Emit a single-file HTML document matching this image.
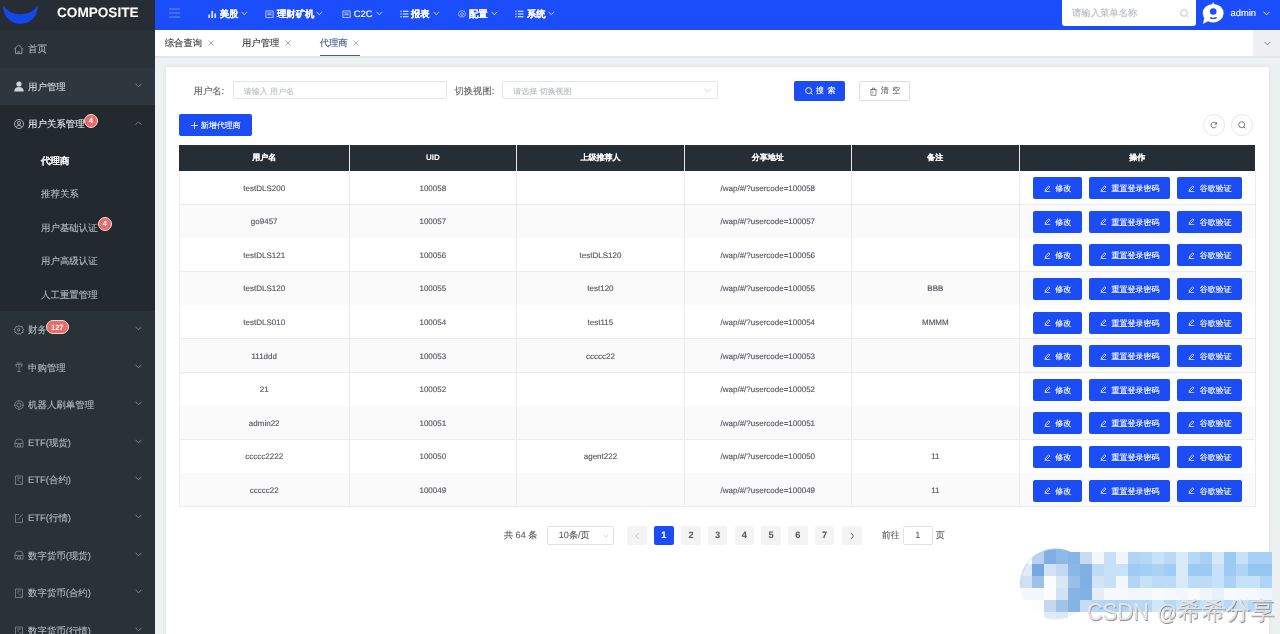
<!DOCTYPE html><html><head><meta charset="utf-8"><style>
*{box-sizing:border-box;margin:0;padding:0}
html,body{width:1280px;height:634px;overflow:hidden;background:#eef1f2;font-family:"Liberation Sans",sans-serif;text-rendering:geometricPrecision}
.abs{position:absolute}
.t{position:absolute;white-space:nowrap;-webkit-text-stroke:0.12px currentColor}
.t[style*=bold]{-webkit-text-stroke:0.04px currentColor}
.badge{position:absolute;background:#ea6b6b;color:#fff;font-size:7.5px;font-weight:bold;text-align:center;border:0.8px solid #f3dede}
</style></head><body><div id="root" style="position:absolute;left:0;top:0;width:1280px;height:634px;overflow:hidden;will-change:transform">
<div class="abs" style="left:0;top:0;width:155px;height:634px;background:#283237;overflow:hidden">
<div class="abs" style="left:0;top:0;width:155px;height:30px;background:#262d34"></div>
<svg class="abs" style="left:2px;top:4px" width="38" height="22" viewBox="0 0 38 22"><path d="M1 1.2 C1 13.5 10 19.8 18.5 19.8 C27 19.8 36 13.5 36 1.2 C32 7 26 10.2 18.5 10.2 C11 10.2 5 7 1 1.2Z" fill="#1448ec"/></svg>
<div class="t" style="left:57px;top:5px;font-size:13.6px;font-weight:bold;color:#fff">COMPOSITE</div>
<div class="abs" style="left:0;top:67.63px;width:155px;height:37.63px;background:#2f373e"></div>
<div class="abs" style="left:0;top:105.26px;width:155px;height:205.63px;background:#22292f"></div>
<svg class="abs" style="left:14px;top:43.81px" width="10" height="11" viewBox="0 0 10 11"><path d="M0.5 5.2 L4.6 0.9 L8.9 5.2 M1.5 4.3 V9.6 H7.9 V4.3" fill="none" stroke="#a9b1b8" stroke-width="0.75"/><path d="M3.8 9.6 V7.6 H5.4 V9.6" fill="none" stroke="#a9b1b8" stroke-width="0.6"/></svg><div class="t" style="left:28px;top:31.00px;height:37.63px;line-height:37.63px;font-size:9.45px;color:#b3bac1;">首页</div>
<svg class="abs" style="left:14px;top:81.44px" width="10" height="11" viewBox="0 0 10 11"><circle cx="5" cy="3" r="2.6" fill="#d0d5da"/><path d="M0.3 10.5 Q0.3 6 5 6 Q9.7 6 9.7 10.5Z" fill="#d0d5da"/></svg><div class="t" style="left:28px;top:68.63px;height:37.63px;line-height:37.63px;font-size:9.45px;color:#d6dbe0;">用户管理</div><svg class="abs" style="left:133.5px;top:81.64px" width="9" height="7" viewBox="0 0 9 7"><path d="M1.5 1.8 L4.5 4.8 L7.5 1.8" fill="none" stroke="#8f979e" stroke-width="0.8"/></svg>
<svg class="abs" style="left:14px;top:119.07px" width="10" height="11" viewBox="0 0 10 11"><circle cx="5" cy="5" r="4.5" fill="none" stroke="#c9ced3" stroke-width="0.8"/><circle cx="5" cy="4" r="1.6" fill="none" stroke="#c9ced3" stroke-width="0.8"/><path d="M2.3 8.3 Q3 6.2 5 6.2 Q7 6.2 7.7 8.3" fill="none" stroke="#c9ced3" stroke-width="0.8"/></svg><div class="t" style="left:28px;top:106.26px;height:37.63px;line-height:37.63px;font-size:9.45px;color:#e6eaee;">用户关系管理</div><svg class="abs" style="left:133.5px;top:120.17px" width="9" height="7" viewBox="0 0 9 7"><path d="M1.5 4.8 L4.5 1.8 L7.5 4.8" fill="none" stroke="#8f979e" stroke-width="0.8"/></svg><div class="badge" style="left:83.9px;top:114.27px;width:14px;height:14px;line-height:12.8px;border-radius:7px">4</div>
<div class="t" style="left:41px;top:144.59px;height:33.60px;line-height:33.60px;font-size:9.45px;color:#f0f2f4;font-weight:bold;">代理商</div>
<div class="t" style="left:41px;top:178.19px;height:33.60px;line-height:33.60px;font-size:9.45px;color:#b3bac1;">推荐关系</div>
<div class="t" style="left:41px;top:211.79px;height:33.60px;line-height:33.60px;font-size:9.45px;color:#b3bac1;">用户基础认证</div><div class="badge" style="left:97.9px;top:217.29px;width:14px;height:14px;line-height:12.8px;border-radius:7px">4</div>
<div class="t" style="left:41px;top:245.39px;height:33.60px;line-height:33.60px;font-size:9.45px;color:#b3bac1;">用户高级认证</div>
<div class="t" style="left:41px;top:278.99px;height:33.60px;line-height:33.60px;font-size:9.45px;color:#b3bac1;">人工重置管理</div>
<svg class="abs" style="left:14px;top:324.70px" width="10" height="11" viewBox="0 0 10 11"><circle cx="4.7" cy="4.8" r="1.2" fill="none" stroke="#a9b1b8" stroke-width="0.7"/><path d="M5 0.6 L6.2 1.6 L7.9 1.3 L8.3 3 L9.6 4.1 L8.9 5.6 L9.3 7.3 L7.6 7.7 L6.6 9.2 L5 8.6 L3.4 9.2 L2.4 7.7 L0.7 7.3 L1.1 5.6 L0.4 4.1 L1.7 3 L2.1 1.3 L3.8 1.6Z" fill="none" stroke="#a9b1b8" stroke-width="0.7"/></svg><div class="t" style="left:28px;top:311.89px;height:37.63px;line-height:37.63px;font-size:9.45px;color:#b3bac1;">财务</div><svg class="abs" style="left:133.5px;top:324.90px" width="9" height="7" viewBox="0 0 9 7"><path d="M1.5 1.8 L4.5 4.8 L7.5 1.8" fill="none" stroke="#8f979e" stroke-width="0.8"/></svg><div class="badge" style="left:45.6px;top:320.20px;width:23.3px;height:14px;line-height:13px;border-radius:7px">127</div>
<svg class="abs" style="left:14px;top:362.33px" width="10" height="11" viewBox="0 0 10 11"><path d="M1.5 2.5 H8.5 M5 2.5 V9.5 M3.2 9.5 H6.8 M2.5 1 H7.5 M2 2.5 Q2 5 3.5 5 M8 2.5 Q8 5 6.5 5" fill="none" stroke="#8e979e" stroke-width="0.7"/></svg><div class="t" style="left:28px;top:349.52px;height:37.63px;line-height:37.63px;font-size:9.45px;color:#b3bac1;">申购管理</div><svg class="abs" style="left:133.5px;top:362.53px" width="9" height="7" viewBox="0 0 9 7"><path d="M1.5 1.8 L4.5 4.8 L7.5 1.8" fill="none" stroke="#8f979e" stroke-width="0.8"/></svg>
<svg class="abs" style="left:14px;top:399.96px" width="10" height="11" viewBox="0 0 10 11"><circle cx="5" cy="5" r="4.3" fill="none" stroke="#8e979e" stroke-width="0.7"/><circle cx="5" cy="5" r="2" fill="none" stroke="#8e979e" stroke-width="0.7"/><path d="M5 0.7V2.5M5 7.5V9.3M0.7 5H2.5M7.5 5H9.3" stroke="#8e979e" stroke-width="0.7"/></svg><div class="t" style="left:28px;top:387.15px;height:37.63px;line-height:37.63px;font-size:9.45px;color:#b3bac1;">机器人刷单管理</div><svg class="abs" style="left:133.5px;top:400.16px" width="9" height="7" viewBox="0 0 9 7"><path d="M1.5 1.8 L4.5 4.8 L7.5 1.8" fill="none" stroke="#8f979e" stroke-width="0.8"/></svg>
<svg class="abs" style="left:14px;top:437.59px" width="10" height="11" viewBox="0 0 10 11"><path d="M1 4 Q1 1 5 1 Q9 1 9 4 V9 H1Z M1 5.5 H9 M3.5 9 V6.8 H6.5 V9" fill="none" stroke="#8e979e" stroke-width="0.7"/></svg><div class="t" style="left:28px;top:424.78px;height:37.63px;line-height:37.63px;font-size:9.45px;color:#b3bac1;">ETF(现货)</div><svg class="abs" style="left:133.5px;top:437.79px" width="9" height="7" viewBox="0 0 9 7"><path d="M1.5 1.8 L4.5 4.8 L7.5 1.8" fill="none" stroke="#8f979e" stroke-width="0.8"/></svg>
<svg class="abs" style="left:14px;top:475.22px" width="10" height="11" viewBox="0 0 10 11"><path d="M1.5 1 H8.5 V9.5 H1.5Z M3 3 H7 M3 5 H5 M5.5 6 L7.5 8.5" fill="none" stroke="#8e979e" stroke-width="0.7"/></svg><div class="t" style="left:28px;top:462.41px;height:37.63px;line-height:37.63px;font-size:9.45px;color:#b3bac1;">ETF(合约)</div><svg class="abs" style="left:133.5px;top:475.42px" width="9" height="7" viewBox="0 0 9 7"><path d="M1.5 1.8 L4.5 4.8 L7.5 1.8" fill="none" stroke="#8f979e" stroke-width="0.8"/></svg>
<svg class="abs" style="left:14px;top:512.86px" width="10" height="11" viewBox="0 0 10 11"><path d="M5 1.5 H1.5 V9.5 H8.5 V5.5 M4 6.5 L8.8 1.2" fill="none" stroke="#8e979e" stroke-width="0.7"/></svg><div class="t" style="left:28px;top:500.04px;height:37.63px;line-height:37.63px;font-size:9.45px;color:#b3bac1;">ETF(行情)</div><svg class="abs" style="left:133.5px;top:513.06px" width="9" height="7" viewBox="0 0 9 7"><path d="M1.5 1.8 L4.5 4.8 L7.5 1.8" fill="none" stroke="#8f979e" stroke-width="0.8"/></svg>
<svg class="abs" style="left:14px;top:550.49px" width="10" height="11" viewBox="0 0 10 11"><path d="M1 4 Q1 1 5 1 Q9 1 9 4 V9 H1Z M1 5.5 H9 M3.5 9 V6.8 H6.5 V9" fill="none" stroke="#8e979e" stroke-width="0.7"/></svg><div class="t" style="left:28px;top:537.67px;height:37.63px;line-height:37.63px;font-size:9.45px;color:#b3bac1;">数字货币(现货)</div><svg class="abs" style="left:133.5px;top:550.69px" width="9" height="7" viewBox="0 0 9 7"><path d="M1.5 1.8 L4.5 4.8 L7.5 1.8" fill="none" stroke="#8f979e" stroke-width="0.8"/></svg>
<svg class="abs" style="left:14px;top:588.12px" width="10" height="11" viewBox="0 0 10 11"><path d="M1.5 1 H8.5 V9.5 H1.5Z M3 3 H7 M3 5 H5 M5.5 6 L7.5 8.5" fill="none" stroke="#8e979e" stroke-width="0.7"/></svg><div class="t" style="left:28px;top:575.30px;height:37.63px;line-height:37.63px;font-size:9.45px;color:#b3bac1;">数字货币(合约)</div><svg class="abs" style="left:133.5px;top:588.32px" width="9" height="7" viewBox="0 0 9 7"><path d="M1.5 1.8 L4.5 4.8 L7.5 1.8" fill="none" stroke="#8f979e" stroke-width="0.8"/></svg>
<svg class="abs" style="left:14px;top:625.75px" width="10" height="11" viewBox="0 0 10 11"><path d="M1.5 1 H8.5 V9.5 H1.5Z M3 3 H7 M3 5 H5 M5.5 6 L7.5 8.5" fill="none" stroke="#8e979e" stroke-width="0.7"/></svg><div class="t" style="left:28px;top:612.93px;height:37.63px;line-height:37.63px;font-size:9.45px;color:#b3bac1;">数字货币(行情)</div><svg class="abs" style="left:133.5px;top:625.95px" width="9" height="7" viewBox="0 0 9 7"><path d="M1.5 1.8 L4.5 4.8 L7.5 1.8" fill="none" stroke="#8f979e" stroke-width="0.8"/></svg>
</div>
<div class="abs" style="left:155px;top:0;width:1125px;height:30px;background:#1b4dfa"></div>
<svg class="abs" style="left:169px;top:8px" width="11" height="10" viewBox="0 0 11 10"><path d="M0 1H11M0 5H11M0 9H11" stroke="#86a2fa" stroke-width="0.75"/></svg>
<svg class="abs" style="left:207.8px;top:9.8px" width="9" height="8.5" viewBox="0 0 9 8.5"><path d="M1.2 8V5.2M4.2 8V1.5M7.2 8V4" stroke="#dfe6fd" stroke-width="1.7" stroke-linecap="round"/></svg>
<div class="t" style="left:219.7px;top:0.5px;height:27px;line-height:27px;font-size:9.33px;font-weight:bold;color:#fff">美股</div>
<svg class="abs" style="left:241.3px;top:11.3px" width="7" height="5" viewBox="0 0 7 5"><path d="M0.6 0.8 L3.3 3.8 L6 0.8" fill="none" stroke="#e8edfe" stroke-width="0.85"/></svg>
<svg class="abs" style="left:265.3px;top:9.8px" width="9" height="8.5" viewBox="0 0 9 8.5"><path d="M0.9 0.9H8.1V7.6H0.9Z M2.4 3H6.6M2.4 4.8H6.6" fill="none" stroke="#d6e0fd" stroke-width="0.85"/></svg>
<div class="t" style="left:277px;top:0.5px;height:27px;line-height:27px;font-size:9.33px;font-weight:bold;color:#fff">理财矿机</div>
<svg class="abs" style="left:316.3px;top:11.3px" width="7" height="5" viewBox="0 0 7 5"><path d="M0.6 0.8 L3.3 3.8 L6 0.8" fill="none" stroke="#e8edfe" stroke-width="0.85"/></svg>
<svg class="abs" style="left:341.8px;top:9.8px" width="9" height="8.5" viewBox="0 0 9 8.5"><path d="M0.9 0.9H8.1V7.6H0.9Z M2.4 3H6.6M2.4 4.8H6.6" fill="none" stroke="#d6e0fd" stroke-width="0.85"/></svg>
<div class="t" style="left:353.8px;top:0.5px;height:27px;line-height:27px;font-size:9.33px;color:#fff">C2C</div>
<svg class="abs" style="left:375.5px;top:11.3px" width="7" height="5" viewBox="0 0 7 5"><path d="M0.6 0.8 L3.3 3.8 L6 0.8" fill="none" stroke="#e8edfe" stroke-width="0.85"/></svg>
<svg class="abs" style="left:400px;top:9.8px" width="9" height="8.5" viewBox="0 0 9 8.5"><path d="M0.3 1.2H1.6M2.8 1.2H8.5M0.3 4H1.6M2.8 4H8.5M0.3 6.8H1.6M2.8 6.8H8.5" stroke="#fff" stroke-width="1.1"/></svg>
<div class="t" style="left:411px;top:0.5px;height:27px;line-height:27px;font-size:9.33px;font-weight:bold;color:#fff">报表</div>
<svg class="abs" style="left:433px;top:11.3px" width="7" height="5" viewBox="0 0 7 5"><path d="M0.6 0.8 L3.3 3.8 L6 0.8" fill="none" stroke="#e8edfe" stroke-width="0.85"/></svg>
<svg class="abs" style="left:458px;top:9.8px" width="9" height="8.5" viewBox="0 0 9 8.5"><circle cx="4" cy="4" r="1.4" fill="none" stroke="#c9d5fc" stroke-width="0.7"/><path d="M4 0.4 L5 1.2 L6.3 1 L6.6 2.3 L7.7 3.1 L7.1 4.3 L7.4 5.6 L6.1 5.9 L5.3 7.1 L4 6.6 L2.7 7.1 L1.9 5.9 L0.6 5.6 L0.9 4.3 L0.3 3.1 L1.4 2.3 L1.7 1 L3 1.2Z" fill="none" stroke="#c9d5fc" stroke-width="0.7"/></svg>
<div class="t" style="left:469px;top:0.5px;height:27px;line-height:27px;font-size:9.33px;font-weight:bold;color:#fff">配置</div>
<svg class="abs" style="left:491px;top:11.3px" width="7" height="5" viewBox="0 0 7 5"><path d="M0.6 0.8 L3.3 3.8 L6 0.8" fill="none" stroke="#e8edfe" stroke-width="0.85"/></svg>
<svg class="abs" style="left:515px;top:9.8px" width="9" height="8.5" viewBox="0 0 9 8.5"><path d="M0.3 1.2H1.6M2.8 1.2H8.5M0.3 4H1.6M2.8 4H8.5M0.3 6.8H1.6M2.8 6.8H8.5" stroke="#fff" stroke-width="1.1"/></svg>
<div class="t" style="left:527px;top:0.5px;height:27px;line-height:27px;font-size:9.33px;font-weight:bold;color:#fff">系统</div>
<svg class="abs" style="left:548px;top:11.3px" width="7" height="5" viewBox="0 0 7 5"><path d="M0.6 0.8 L3.3 3.8 L6 0.8" fill="none" stroke="#e8edfe" stroke-width="0.85"/></svg>
<div class="abs" style="left:1061.5px;top:-3px;width:134px;height:28.5px;background:#fff;border-radius:3px"></div>
<div class="t" style="left:1072px;top:0;height:26px;line-height:26px;font-size:9.33px;color:#b4b8bf">请输入菜单名称</div>
<svg class="abs" style="left:1179.5px;top:8.5px" width="9" height="9" viewBox="0 0 9 9"><circle cx="4" cy="4" r="3.3" fill="none" stroke="#b4b8bf" stroke-width="0.8"/><path d="M6.5 6.5L8.5 8.5" stroke="#b4b8bf" stroke-width="0.8"/></svg>
<svg class="abs" style="left:1201px;top:1px" width="24" height="24" viewBox="0 0 24 24"><ellipse cx="12.2" cy="12.2" rx="10.4" ry="9.3" fill="#fff"/><path d="M3.6 16 L1.8 23 L8.5 19.5Z" fill="#fff"/><rect x="11.5" y="1.6" width="1.4" height="3" fill="#fff"/><circle cx="12.2" cy="10.5" r="3.3" fill="#1b4dfa"/><path d="M9 16.6 Q12.2 18.2 15.6 16.6" fill="none" stroke="#1b4dfa" stroke-width="1.3"/></svg>
<div class="t" style="left:1230.5px;top:0;height:27px;line-height:27px;font-size:9.33px;color:#fff">admin</div>
<svg class="abs" style="left:1262px;top:10.20px" width="9" height="7" viewBox="0 0 9 7"><path d="M1.5 1.8 L4.5 4.8 L7.5 1.8" fill="none" stroke="#fff" stroke-width="0.9"/></svg>
<div class="abs" style="left:155px;top:30px;width:1125px;height:26.5px;background:#fff"></div>
<div class="abs" style="left:155px;top:56.3px;width:1125px;height:1.7px;background:#e3e5e7"></div>
<div class="abs" style="left:1253px;top:30px;width:27px;height:26.3px;background:#eef0f2"></div>
<svg class="abs" style="left:1262.5px;top:39.70px" width="9" height="7" viewBox="0 0 9 7"><path d="M1.5 1.8 L4.5 4.8 L7.5 1.8" fill="none" stroke="#666" stroke-width="0.8"/></svg>
<div class="t" style="left:164.75px;top:30px;height:26px;line-height:26px;font-size:9.33px;color:#363636">综合查询</div>
<svg class="abs" style="left:208px;top:40px" width="6" height="6" viewBox="0 0 6 6"><path d="M0.5 0.5L5.5 5.5M5.5 0.5L0.5 5.5" stroke="#888" stroke-width="0.7"/></svg>
<div class="t" style="left:242px;top:30px;height:26px;line-height:26px;font-size:9.33px;color:#363636">用户管理</div>
<svg class="abs" style="left:285px;top:40px" width="6" height="6" viewBox="0 0 6 6"><path d="M0.5 0.5L5.5 5.5M5.5 0.5L0.5 5.5" stroke="#888" stroke-width="0.7"/></svg>
<div class="t" style="left:319.7px;top:30px;height:26px;line-height:26px;font-size:9.33px;color:#3d5a8c">代理商</div>
<svg class="abs" style="left:353px;top:40px" width="6" height="6" viewBox="0 0 6 6"><path d="M0.5 0.5L5.5 5.5M5.5 0.5L0.5 5.5" stroke="#888" stroke-width="0.7"/></svg>
<div class="abs" style="left:319.7px;top:54.7px;width:40.6px;height:1.6px;background:#4a6186"></div>
<div class="abs" style="left:165.5px;top:66.5px;width:1103.5px;height:580px;background:#fff;box-shadow:0 0 4px rgba(40,60,70,0.10)"></div>
<div class="t" style="left:193.6px;top:81.5px;height:18.5px;line-height:18.5px;font-size:9.33px;color:#606266">用户名:</div>
<div class="abs" style="left:233.3px;top:81.2px;width:214.2px;height:18.2px;border:0.75px solid #e2e5e9;border-radius:1.5px;background:#fff"></div>
<div class="t" style="left:243.8px;top:82.5px;height:18.5px;line-height:18.5px;font-size:8px;color:#b8bcc3">请输入 用户名</div>
<div class="t" style="left:454.4px;top:81.5px;height:18.5px;line-height:18.5px;font-size:9.33px;color:#606266">切换视图:</div>
<div class="abs" style="left:502.3px;top:81.2px;width:215.5px;height:18.2px;border:0.75px solid #e2e5e9;border-radius:1.5px;background:#fff"></div>
<div class="t" style="left:513.3px;top:82.5px;height:18.5px;line-height:18.5px;font-size:8px;color:#b8bcc3">请选择 切换视图</div>
<svg class="abs" style="left:703px;top:87.20px" width="9" height="7" viewBox="0 0 9 7"><path d="M1.5 1.8 L4.5 4.8 L7.5 1.8" fill="none" stroke="#c0c4cc" stroke-width="0.7"/></svg>
<div class="abs" style="left:794.4px;top:81px;width:51px;height:19.5px;background:#1c4df4;border-radius:2px"></div>
<svg class="abs" style="left:805px;top:87px" width="8" height="8" viewBox="0 0 8 8"><circle cx="3.6" cy="3.6" r="3" fill="none" stroke="#fff" stroke-width="0.9"/><path d="M5.8 5.8L7.5 7.5" stroke="#fff" stroke-width="0.9"/></svg>
<div class="t" style="left:816px;top:81px;height:19.5px;line-height:19.5px;font-size:8px;color:#fff;letter-spacing:3.5px">搜索</div>
<div class="abs" style="left:858.5px;top:81px;width:51px;height:19.5px;background:#fff;border:0.7px solid #dcdfe6;border-radius:2px"></div>
<svg class="abs" style="left:869.5px;top:86.5px" width="7" height="9" viewBox="0 0 7 9"><path d="M1 2.5H6V8.3H1Z M0.3 2.5H6.7 M2.5 2.5V1H4.5V2.5 M2.8 4.5V6.5" fill="none" stroke="#606266" stroke-width="0.7"/></svg>
<div class="t" style="left:880.7px;top:81px;height:19.5px;line-height:19.5px;font-size:8px;color:#606266;letter-spacing:3.5px">清空</div>
<div class="abs" style="left:179px;top:114.4px;width:73px;height:21.6px;background:#1c4df4;border-radius:2px"></div>
<svg class="abs" style="left:190.5px;top:122px" width="7" height="7" viewBox="0 0 7 7"><path d="M3.5 0V7M0 3.5H7" stroke="#fff" stroke-width="0.8"/></svg>
<div class="t" style="left:200.7px;top:115.4px;height:21.6px;line-height:21.6px;font-size:8px;color:#fff">新增代理商</div>
<div class="abs" style="left:1203.3px;top:114.1px;width:21.5px;height:21.5px;border:0.7px solid #e4e7ed;border-radius:50%;background:#fff"></div>
<div class="abs" style="left:1231px;top:114.1px;width:21.5px;height:21.5px;border:0.7px solid #e4e7ed;border-radius:50%;background:#fff"></div>
<svg class="abs" style="left:1210px;top:121px" width="8" height="8" viewBox="0 0 8 8"><path d="M6.5 3 A2.8 2.8 0 1 0 6.3 5.5 M6.5 1.2V3.2H4.5" fill="none" stroke="#555" stroke-width="0.8"/></svg>
<svg class="abs" style="left:1238px;top:121px" width="8" height="8" viewBox="0 0 8 8"><circle cx="3.7" cy="3.7" r="3" fill="none" stroke="#555" stroke-width="0.8"/><path d="M5.9 5.9L7.4 7.4" stroke="#555" stroke-width="0.8"/></svg>
<div class="abs" style="left:179.3px;top:145px;width:1076.00px;height:26px;background:#262e35"></div>
<div class="t" style="left:179.30px;top:145px;width:169.80px;height:26px;line-height:26px;text-align:center;font-size:8px;font-weight:bold;color:#fff">用户名</div>
<div class="t" style="left:349.10px;top:145px;width:167.40px;height:26px;line-height:26px;text-align:center;font-size:8px;font-weight:bold;color:#fff">UID</div>
<div class="t" style="left:516.50px;top:145px;width:167.90px;height:26px;line-height:26px;text-align:center;font-size:8px;font-weight:bold;color:#fff">上级推荐人</div>
<div class="t" style="left:684.40px;top:145px;width:166.85px;height:26px;line-height:26px;text-align:center;font-size:8px;font-weight:bold;color:#fff">分享地址</div>
<div class="t" style="left:851.25px;top:145px;width:168.15px;height:26px;line-height:26px;text-align:center;font-size:8px;font-weight:bold;color:#fff">备注</div>
<div class="t" style="left:1019.40px;top:145px;width:235.90px;height:26px;line-height:26px;text-align:center;font-size:8px;font-weight:bold;color:#fff">操作</div>
<div class="abs" style="left:348.60px;top:145px;width:1px;height:26px;background:#e8eaee"></div>
<div class="abs" style="left:516.00px;top:145px;width:1px;height:26px;background:#e8eaee"></div>
<div class="abs" style="left:683.90px;top:145px;width:1px;height:26px;background:#e8eaee"></div>
<div class="abs" style="left:850.75px;top:145px;width:1px;height:26px;background:#e8eaee"></div>
<div class="abs" style="left:1018.90px;top:145px;width:1px;height:26px;background:#e8eaee"></div>
<div class="abs" style="left:179.3px;top:171.00px;width:1076.00px;height:33.60px;background:#fff"></div>
<div class="abs" style="left:179.3px;top:203.90px;width:1076.00px;height:0.7px;background:#eaedef"></div>
<div class="t" style="left:179.30px;top:171.60px;width:169.80px;height:33.60px;line-height:33.60px;text-align:center;font-size:8px;color:#50535a">testDLS200</div>
<div class="t" style="left:349.10px;top:171.60px;width:167.40px;height:33.60px;line-height:33.60px;text-align:center;font-size:8px;color:#50535a">100058</div>
<div class="t" style="left:684.40px;top:171.60px;width:166.85px;height:33.60px;line-height:33.60px;text-align:center;font-size:8px;color:#50535a">/wap/#/?usercode=100058</div>
<div class="abs" style="left:1033.1px;top:177.20px;width:48.8px;height:22px;background:#1c4df4;border-radius:2px"></div>
<svg class="abs" style="left:1044.4px;top:184.80px" width="7" height="7" viewBox="0 0 7 7"><path d="M1.2 5.4 L1.5 4 L4.8 0.8 L6 2 L2.7 5.2 Z M0.6 6.6 H6.2" fill="none" stroke="#fff" stroke-width="0.75"/></svg>
<div class="t" style="left:1055.3px;top:178.10px;height:22px;line-height:22px;font-size:8px;color:#fff">修改</div>
<div class="abs" style="left:1089px;top:177.20px;width:81px;height:22px;background:#1c4df4;border-radius:2px"></div>
<svg class="abs" style="left:1100.3px;top:184.80px" width="7" height="7" viewBox="0 0 7 7"><path d="M1.2 5.4 L1.5 4 L4.8 0.8 L6 2 L2.7 5.2 Z M0.6 6.6 H6.2" fill="none" stroke="#fff" stroke-width="0.75"/></svg>
<div class="t" style="left:1111.5px;top:178.10px;height:22px;line-height:22px;font-size:8px;color:#fff">重置登录密码</div>
<div class="abs" style="left:1177.2px;top:177.20px;width:65px;height:22px;background:#1c4df4;border-radius:2px"></div>
<svg class="abs" style="left:1188.4px;top:184.80px" width="7" height="7" viewBox="0 0 7 7"><path d="M1.2 5.4 L1.5 4 L4.8 0.8 L6 2 L2.7 5.2 Z M0.6 6.6 H6.2" fill="none" stroke="#fff" stroke-width="0.75"/></svg>
<div class="t" style="left:1199.7px;top:178.10px;height:22px;line-height:22px;font-size:8px;color:#fff">谷歌验证</div>
<div class="abs" style="left:179.3px;top:204.60px;width:1076.00px;height:33.60px;background:#fafafa"></div>
<div class="abs" style="left:179.3px;top:237.50px;width:1076.00px;height:0.7px;background:#eaedef"></div>
<div class="t" style="left:179.30px;top:205.20px;width:169.80px;height:33.60px;line-height:33.60px;text-align:center;font-size:8px;color:#50535a">go9457</div>
<div class="t" style="left:349.10px;top:205.20px;width:167.40px;height:33.60px;line-height:33.60px;text-align:center;font-size:8px;color:#50535a">100057</div>
<div class="t" style="left:684.40px;top:205.20px;width:166.85px;height:33.60px;line-height:33.60px;text-align:center;font-size:8px;color:#50535a">/wap/#/?usercode=100057</div>
<div class="abs" style="left:1033.1px;top:210.80px;width:48.8px;height:22px;background:#1c4df4;border-radius:2px"></div>
<svg class="abs" style="left:1044.4px;top:218.40px" width="7" height="7" viewBox="0 0 7 7"><path d="M1.2 5.4 L1.5 4 L4.8 0.8 L6 2 L2.7 5.2 Z M0.6 6.6 H6.2" fill="none" stroke="#fff" stroke-width="0.75"/></svg>
<div class="t" style="left:1055.3px;top:211.70px;height:22px;line-height:22px;font-size:8px;color:#fff">修改</div>
<div class="abs" style="left:1089px;top:210.80px;width:81px;height:22px;background:#1c4df4;border-radius:2px"></div>
<svg class="abs" style="left:1100.3px;top:218.40px" width="7" height="7" viewBox="0 0 7 7"><path d="M1.2 5.4 L1.5 4 L4.8 0.8 L6 2 L2.7 5.2 Z M0.6 6.6 H6.2" fill="none" stroke="#fff" stroke-width="0.75"/></svg>
<div class="t" style="left:1111.5px;top:211.70px;height:22px;line-height:22px;font-size:8px;color:#fff">重置登录密码</div>
<div class="abs" style="left:1177.2px;top:210.80px;width:65px;height:22px;background:#1c4df4;border-radius:2px"></div>
<svg class="abs" style="left:1188.4px;top:218.40px" width="7" height="7" viewBox="0 0 7 7"><path d="M1.2 5.4 L1.5 4 L4.8 0.8 L6 2 L2.7 5.2 Z M0.6 6.6 H6.2" fill="none" stroke="#fff" stroke-width="0.75"/></svg>
<div class="t" style="left:1199.7px;top:211.70px;height:22px;line-height:22px;font-size:8px;color:#fff">谷歌验证</div>
<div class="abs" style="left:179.3px;top:238.20px;width:1076.00px;height:33.60px;background:#fff"></div>
<div class="abs" style="left:179.3px;top:271.10px;width:1076.00px;height:0.7px;background:#eaedef"></div>
<div class="t" style="left:179.30px;top:238.80px;width:169.80px;height:33.60px;line-height:33.60px;text-align:center;font-size:8px;color:#50535a">testDLS121</div>
<div class="t" style="left:349.10px;top:238.80px;width:167.40px;height:33.60px;line-height:33.60px;text-align:center;font-size:8px;color:#50535a">100056</div>
<div class="t" style="left:516.50px;top:238.80px;width:167.90px;height:33.60px;line-height:33.60px;text-align:center;font-size:8px;color:#50535a">testDLS120</div>
<div class="t" style="left:684.40px;top:238.80px;width:166.85px;height:33.60px;line-height:33.60px;text-align:center;font-size:8px;color:#50535a">/wap/#/?usercode=100056</div>
<div class="abs" style="left:1033.1px;top:244.40px;width:48.8px;height:22px;background:#1c4df4;border-radius:2px"></div>
<svg class="abs" style="left:1044.4px;top:252.00px" width="7" height="7" viewBox="0 0 7 7"><path d="M1.2 5.4 L1.5 4 L4.8 0.8 L6 2 L2.7 5.2 Z M0.6 6.6 H6.2" fill="none" stroke="#fff" stroke-width="0.75"/></svg>
<div class="t" style="left:1055.3px;top:245.30px;height:22px;line-height:22px;font-size:8px;color:#fff">修改</div>
<div class="abs" style="left:1089px;top:244.40px;width:81px;height:22px;background:#1c4df4;border-radius:2px"></div>
<svg class="abs" style="left:1100.3px;top:252.00px" width="7" height="7" viewBox="0 0 7 7"><path d="M1.2 5.4 L1.5 4 L4.8 0.8 L6 2 L2.7 5.2 Z M0.6 6.6 H6.2" fill="none" stroke="#fff" stroke-width="0.75"/></svg>
<div class="t" style="left:1111.5px;top:245.30px;height:22px;line-height:22px;font-size:8px;color:#fff">重置登录密码</div>
<div class="abs" style="left:1177.2px;top:244.40px;width:65px;height:22px;background:#1c4df4;border-radius:2px"></div>
<svg class="abs" style="left:1188.4px;top:252.00px" width="7" height="7" viewBox="0 0 7 7"><path d="M1.2 5.4 L1.5 4 L4.8 0.8 L6 2 L2.7 5.2 Z M0.6 6.6 H6.2" fill="none" stroke="#fff" stroke-width="0.75"/></svg>
<div class="t" style="left:1199.7px;top:245.30px;height:22px;line-height:22px;font-size:8px;color:#fff">谷歌验证</div>
<div class="abs" style="left:179.3px;top:271.80px;width:1076.00px;height:33.60px;background:#fafafa"></div>
<div class="abs" style="left:179.3px;top:304.70px;width:1076.00px;height:0.7px;background:#eaedef"></div>
<div class="t" style="left:179.30px;top:272.40px;width:169.80px;height:33.60px;line-height:33.60px;text-align:center;font-size:8px;color:#50535a">testDLS120</div>
<div class="t" style="left:349.10px;top:272.40px;width:167.40px;height:33.60px;line-height:33.60px;text-align:center;font-size:8px;color:#50535a">100055</div>
<div class="t" style="left:516.50px;top:272.40px;width:167.90px;height:33.60px;line-height:33.60px;text-align:center;font-size:8px;color:#50535a">test120</div>
<div class="t" style="left:684.40px;top:272.40px;width:166.85px;height:33.60px;line-height:33.60px;text-align:center;font-size:8px;color:#50535a">/wap/#/?usercode=100055</div>
<div class="t" style="left:851.25px;top:272.40px;width:168.15px;height:33.60px;line-height:33.60px;text-align:center;font-size:8px;color:#50535a">BBB</div>
<div class="abs" style="left:1033.1px;top:278.00px;width:48.8px;height:22px;background:#1c4df4;border-radius:2px"></div>
<svg class="abs" style="left:1044.4px;top:285.60px" width="7" height="7" viewBox="0 0 7 7"><path d="M1.2 5.4 L1.5 4 L4.8 0.8 L6 2 L2.7 5.2 Z M0.6 6.6 H6.2" fill="none" stroke="#fff" stroke-width="0.75"/></svg>
<div class="t" style="left:1055.3px;top:278.90px;height:22px;line-height:22px;font-size:8px;color:#fff">修改</div>
<div class="abs" style="left:1089px;top:278.00px;width:81px;height:22px;background:#1c4df4;border-radius:2px"></div>
<svg class="abs" style="left:1100.3px;top:285.60px" width="7" height="7" viewBox="0 0 7 7"><path d="M1.2 5.4 L1.5 4 L4.8 0.8 L6 2 L2.7 5.2 Z M0.6 6.6 H6.2" fill="none" stroke="#fff" stroke-width="0.75"/></svg>
<div class="t" style="left:1111.5px;top:278.90px;height:22px;line-height:22px;font-size:8px;color:#fff">重置登录密码</div>
<div class="abs" style="left:1177.2px;top:278.00px;width:65px;height:22px;background:#1c4df4;border-radius:2px"></div>
<svg class="abs" style="left:1188.4px;top:285.60px" width="7" height="7" viewBox="0 0 7 7"><path d="M1.2 5.4 L1.5 4 L4.8 0.8 L6 2 L2.7 5.2 Z M0.6 6.6 H6.2" fill="none" stroke="#fff" stroke-width="0.75"/></svg>
<div class="t" style="left:1199.7px;top:278.90px;height:22px;line-height:22px;font-size:8px;color:#fff">谷歌验证</div>
<div class="abs" style="left:179.3px;top:305.40px;width:1076.00px;height:33.60px;background:#fff"></div>
<div class="abs" style="left:179.3px;top:338.30px;width:1076.00px;height:0.7px;background:#eaedef"></div>
<div class="t" style="left:179.30px;top:306.00px;width:169.80px;height:33.60px;line-height:33.60px;text-align:center;font-size:8px;color:#50535a">testDLS010</div>
<div class="t" style="left:349.10px;top:306.00px;width:167.40px;height:33.60px;line-height:33.60px;text-align:center;font-size:8px;color:#50535a">100054</div>
<div class="t" style="left:516.50px;top:306.00px;width:167.90px;height:33.60px;line-height:33.60px;text-align:center;font-size:8px;color:#50535a">test115</div>
<div class="t" style="left:684.40px;top:306.00px;width:166.85px;height:33.60px;line-height:33.60px;text-align:center;font-size:8px;color:#50535a">/wap/#/?usercode=100054</div>
<div class="t" style="left:851.25px;top:306.00px;width:168.15px;height:33.60px;line-height:33.60px;text-align:center;font-size:8px;color:#50535a">MMMM</div>
<div class="abs" style="left:1033.1px;top:311.60px;width:48.8px;height:22px;background:#1c4df4;border-radius:2px"></div>
<svg class="abs" style="left:1044.4px;top:319.20px" width="7" height="7" viewBox="0 0 7 7"><path d="M1.2 5.4 L1.5 4 L4.8 0.8 L6 2 L2.7 5.2 Z M0.6 6.6 H6.2" fill="none" stroke="#fff" stroke-width="0.75"/></svg>
<div class="t" style="left:1055.3px;top:312.50px;height:22px;line-height:22px;font-size:8px;color:#fff">修改</div>
<div class="abs" style="left:1089px;top:311.60px;width:81px;height:22px;background:#1c4df4;border-radius:2px"></div>
<svg class="abs" style="left:1100.3px;top:319.20px" width="7" height="7" viewBox="0 0 7 7"><path d="M1.2 5.4 L1.5 4 L4.8 0.8 L6 2 L2.7 5.2 Z M0.6 6.6 H6.2" fill="none" stroke="#fff" stroke-width="0.75"/></svg>
<div class="t" style="left:1111.5px;top:312.50px;height:22px;line-height:22px;font-size:8px;color:#fff">重置登录密码</div>
<div class="abs" style="left:1177.2px;top:311.60px;width:65px;height:22px;background:#1c4df4;border-radius:2px"></div>
<svg class="abs" style="left:1188.4px;top:319.20px" width="7" height="7" viewBox="0 0 7 7"><path d="M1.2 5.4 L1.5 4 L4.8 0.8 L6 2 L2.7 5.2 Z M0.6 6.6 H6.2" fill="none" stroke="#fff" stroke-width="0.75"/></svg>
<div class="t" style="left:1199.7px;top:312.50px;height:22px;line-height:22px;font-size:8px;color:#fff">谷歌验证</div>
<div class="abs" style="left:179.3px;top:339.00px;width:1076.00px;height:33.60px;background:#fafafa"></div>
<div class="abs" style="left:179.3px;top:371.90px;width:1076.00px;height:0.7px;background:#eaedef"></div>
<div class="t" style="left:179.30px;top:339.60px;width:169.80px;height:33.60px;line-height:33.60px;text-align:center;font-size:8px;color:#50535a">111ddd</div>
<div class="t" style="left:349.10px;top:339.60px;width:167.40px;height:33.60px;line-height:33.60px;text-align:center;font-size:8px;color:#50535a">100053</div>
<div class="t" style="left:516.50px;top:339.60px;width:167.90px;height:33.60px;line-height:33.60px;text-align:center;font-size:8px;color:#50535a">ccccc22</div>
<div class="t" style="left:684.40px;top:339.60px;width:166.85px;height:33.60px;line-height:33.60px;text-align:center;font-size:8px;color:#50535a">/wap/#/?usercode=100053</div>
<div class="abs" style="left:1033.1px;top:345.20px;width:48.8px;height:22px;background:#1c4df4;border-radius:2px"></div>
<svg class="abs" style="left:1044.4px;top:352.80px" width="7" height="7" viewBox="0 0 7 7"><path d="M1.2 5.4 L1.5 4 L4.8 0.8 L6 2 L2.7 5.2 Z M0.6 6.6 H6.2" fill="none" stroke="#fff" stroke-width="0.75"/></svg>
<div class="t" style="left:1055.3px;top:346.10px;height:22px;line-height:22px;font-size:8px;color:#fff">修改</div>
<div class="abs" style="left:1089px;top:345.20px;width:81px;height:22px;background:#1c4df4;border-radius:2px"></div>
<svg class="abs" style="left:1100.3px;top:352.80px" width="7" height="7" viewBox="0 0 7 7"><path d="M1.2 5.4 L1.5 4 L4.8 0.8 L6 2 L2.7 5.2 Z M0.6 6.6 H6.2" fill="none" stroke="#fff" stroke-width="0.75"/></svg>
<div class="t" style="left:1111.5px;top:346.10px;height:22px;line-height:22px;font-size:8px;color:#fff">重置登录密码</div>
<div class="abs" style="left:1177.2px;top:345.20px;width:65px;height:22px;background:#1c4df4;border-radius:2px"></div>
<svg class="abs" style="left:1188.4px;top:352.80px" width="7" height="7" viewBox="0 0 7 7"><path d="M1.2 5.4 L1.5 4 L4.8 0.8 L6 2 L2.7 5.2 Z M0.6 6.6 H6.2" fill="none" stroke="#fff" stroke-width="0.75"/></svg>
<div class="t" style="left:1199.7px;top:346.10px;height:22px;line-height:22px;font-size:8px;color:#fff">谷歌验证</div>
<div class="abs" style="left:179.3px;top:372.60px;width:1076.00px;height:33.60px;background:#fff"></div>
<div class="abs" style="left:179.3px;top:405.50px;width:1076.00px;height:0.7px;background:#eaedef"></div>
<div class="t" style="left:179.30px;top:373.20px;width:169.80px;height:33.60px;line-height:33.60px;text-align:center;font-size:8px;color:#50535a">21</div>
<div class="t" style="left:349.10px;top:373.20px;width:167.40px;height:33.60px;line-height:33.60px;text-align:center;font-size:8px;color:#50535a">100052</div>
<div class="t" style="left:684.40px;top:373.20px;width:166.85px;height:33.60px;line-height:33.60px;text-align:center;font-size:8px;color:#50535a">/wap/#/?usercode=100052</div>
<div class="abs" style="left:1033.1px;top:378.80px;width:48.8px;height:22px;background:#1c4df4;border-radius:2px"></div>
<svg class="abs" style="left:1044.4px;top:386.40px" width="7" height="7" viewBox="0 0 7 7"><path d="M1.2 5.4 L1.5 4 L4.8 0.8 L6 2 L2.7 5.2 Z M0.6 6.6 H6.2" fill="none" stroke="#fff" stroke-width="0.75"/></svg>
<div class="t" style="left:1055.3px;top:379.70px;height:22px;line-height:22px;font-size:8px;color:#fff">修改</div>
<div class="abs" style="left:1089px;top:378.80px;width:81px;height:22px;background:#1c4df4;border-radius:2px"></div>
<svg class="abs" style="left:1100.3px;top:386.40px" width="7" height="7" viewBox="0 0 7 7"><path d="M1.2 5.4 L1.5 4 L4.8 0.8 L6 2 L2.7 5.2 Z M0.6 6.6 H6.2" fill="none" stroke="#fff" stroke-width="0.75"/></svg>
<div class="t" style="left:1111.5px;top:379.70px;height:22px;line-height:22px;font-size:8px;color:#fff">重置登录密码</div>
<div class="abs" style="left:1177.2px;top:378.80px;width:65px;height:22px;background:#1c4df4;border-radius:2px"></div>
<svg class="abs" style="left:1188.4px;top:386.40px" width="7" height="7" viewBox="0 0 7 7"><path d="M1.2 5.4 L1.5 4 L4.8 0.8 L6 2 L2.7 5.2 Z M0.6 6.6 H6.2" fill="none" stroke="#fff" stroke-width="0.75"/></svg>
<div class="t" style="left:1199.7px;top:379.70px;height:22px;line-height:22px;font-size:8px;color:#fff">谷歌验证</div>
<div class="abs" style="left:179.3px;top:406.20px;width:1076.00px;height:33.60px;background:#fafafa"></div>
<div class="abs" style="left:179.3px;top:439.10px;width:1076.00px;height:0.7px;background:#eaedef"></div>
<div class="t" style="left:179.30px;top:406.80px;width:169.80px;height:33.60px;line-height:33.60px;text-align:center;font-size:8px;color:#50535a">admin22</div>
<div class="t" style="left:349.10px;top:406.80px;width:167.40px;height:33.60px;line-height:33.60px;text-align:center;font-size:8px;color:#50535a">100051</div>
<div class="t" style="left:684.40px;top:406.80px;width:166.85px;height:33.60px;line-height:33.60px;text-align:center;font-size:8px;color:#50535a">/wap/#/?usercode=100051</div>
<div class="abs" style="left:1033.1px;top:412.40px;width:48.8px;height:22px;background:#1c4df4;border-radius:2px"></div>
<svg class="abs" style="left:1044.4px;top:420.00px" width="7" height="7" viewBox="0 0 7 7"><path d="M1.2 5.4 L1.5 4 L4.8 0.8 L6 2 L2.7 5.2 Z M0.6 6.6 H6.2" fill="none" stroke="#fff" stroke-width="0.75"/></svg>
<div class="t" style="left:1055.3px;top:413.30px;height:22px;line-height:22px;font-size:8px;color:#fff">修改</div>
<div class="abs" style="left:1089px;top:412.40px;width:81px;height:22px;background:#1c4df4;border-radius:2px"></div>
<svg class="abs" style="left:1100.3px;top:420.00px" width="7" height="7" viewBox="0 0 7 7"><path d="M1.2 5.4 L1.5 4 L4.8 0.8 L6 2 L2.7 5.2 Z M0.6 6.6 H6.2" fill="none" stroke="#fff" stroke-width="0.75"/></svg>
<div class="t" style="left:1111.5px;top:413.30px;height:22px;line-height:22px;font-size:8px;color:#fff">重置登录密码</div>
<div class="abs" style="left:1177.2px;top:412.40px;width:65px;height:22px;background:#1c4df4;border-radius:2px"></div>
<svg class="abs" style="left:1188.4px;top:420.00px" width="7" height="7" viewBox="0 0 7 7"><path d="M1.2 5.4 L1.5 4 L4.8 0.8 L6 2 L2.7 5.2 Z M0.6 6.6 H6.2" fill="none" stroke="#fff" stroke-width="0.75"/></svg>
<div class="t" style="left:1199.7px;top:413.30px;height:22px;line-height:22px;font-size:8px;color:#fff">谷歌验证</div>
<div class="abs" style="left:179.3px;top:439.80px;width:1076.00px;height:33.60px;background:#fff"></div>
<div class="abs" style="left:179.3px;top:472.70px;width:1076.00px;height:0.7px;background:#eaedef"></div>
<div class="t" style="left:179.30px;top:440.40px;width:169.80px;height:33.60px;line-height:33.60px;text-align:center;font-size:8px;color:#50535a">ccccc2222</div>
<div class="t" style="left:349.10px;top:440.40px;width:167.40px;height:33.60px;line-height:33.60px;text-align:center;font-size:8px;color:#50535a">100050</div>
<div class="t" style="left:516.50px;top:440.40px;width:167.90px;height:33.60px;line-height:33.60px;text-align:center;font-size:8px;color:#50535a">agent222</div>
<div class="t" style="left:684.40px;top:440.40px;width:166.85px;height:33.60px;line-height:33.60px;text-align:center;font-size:8px;color:#50535a">/wap/#/?usercode=100050</div>
<div class="t" style="left:851.25px;top:440.40px;width:168.15px;height:33.60px;line-height:33.60px;text-align:center;font-size:8px;color:#50535a">11</div>
<div class="abs" style="left:1033.1px;top:446.00px;width:48.8px;height:22px;background:#1c4df4;border-radius:2px"></div>
<svg class="abs" style="left:1044.4px;top:453.60px" width="7" height="7" viewBox="0 0 7 7"><path d="M1.2 5.4 L1.5 4 L4.8 0.8 L6 2 L2.7 5.2 Z M0.6 6.6 H6.2" fill="none" stroke="#fff" stroke-width="0.75"/></svg>
<div class="t" style="left:1055.3px;top:446.90px;height:22px;line-height:22px;font-size:8px;color:#fff">修改</div>
<div class="abs" style="left:1089px;top:446.00px;width:81px;height:22px;background:#1c4df4;border-radius:2px"></div>
<svg class="abs" style="left:1100.3px;top:453.60px" width="7" height="7" viewBox="0 0 7 7"><path d="M1.2 5.4 L1.5 4 L4.8 0.8 L6 2 L2.7 5.2 Z M0.6 6.6 H6.2" fill="none" stroke="#fff" stroke-width="0.75"/></svg>
<div class="t" style="left:1111.5px;top:446.90px;height:22px;line-height:22px;font-size:8px;color:#fff">重置登录密码</div>
<div class="abs" style="left:1177.2px;top:446.00px;width:65px;height:22px;background:#1c4df4;border-radius:2px"></div>
<svg class="abs" style="left:1188.4px;top:453.60px" width="7" height="7" viewBox="0 0 7 7"><path d="M1.2 5.4 L1.5 4 L4.8 0.8 L6 2 L2.7 5.2 Z M0.6 6.6 H6.2" fill="none" stroke="#fff" stroke-width="0.75"/></svg>
<div class="t" style="left:1199.7px;top:446.90px;height:22px;line-height:22px;font-size:8px;color:#fff">谷歌验证</div>
<div class="abs" style="left:179.3px;top:473.40px;width:1076.00px;height:33.60px;background:#fafafa"></div>
<div class="abs" style="left:179.3px;top:506.30px;width:1076.00px;height:0.7px;background:#eaedef"></div>
<div class="t" style="left:179.30px;top:474.00px;width:169.80px;height:33.60px;line-height:33.60px;text-align:center;font-size:8px;color:#50535a">ccccc22</div>
<div class="t" style="left:349.10px;top:474.00px;width:167.40px;height:33.60px;line-height:33.60px;text-align:center;font-size:8px;color:#50535a">100049</div>
<div class="t" style="left:684.40px;top:474.00px;width:166.85px;height:33.60px;line-height:33.60px;text-align:center;font-size:8px;color:#50535a">/wap/#/?usercode=100049</div>
<div class="t" style="left:851.25px;top:474.00px;width:168.15px;height:33.60px;line-height:33.60px;text-align:center;font-size:8px;color:#50535a">11</div>
<div class="abs" style="left:1033.1px;top:479.60px;width:48.8px;height:22px;background:#1c4df4;border-radius:2px"></div>
<svg class="abs" style="left:1044.4px;top:487.20px" width="7" height="7" viewBox="0 0 7 7"><path d="M1.2 5.4 L1.5 4 L4.8 0.8 L6 2 L2.7 5.2 Z M0.6 6.6 H6.2" fill="none" stroke="#fff" stroke-width="0.75"/></svg>
<div class="t" style="left:1055.3px;top:480.50px;height:22px;line-height:22px;font-size:8px;color:#fff">修改</div>
<div class="abs" style="left:1089px;top:479.60px;width:81px;height:22px;background:#1c4df4;border-radius:2px"></div>
<svg class="abs" style="left:1100.3px;top:487.20px" width="7" height="7" viewBox="0 0 7 7"><path d="M1.2 5.4 L1.5 4 L4.8 0.8 L6 2 L2.7 5.2 Z M0.6 6.6 H6.2" fill="none" stroke="#fff" stroke-width="0.75"/></svg>
<div class="t" style="left:1111.5px;top:480.50px;height:22px;line-height:22px;font-size:8px;color:#fff">重置登录密码</div>
<div class="abs" style="left:1177.2px;top:479.60px;width:65px;height:22px;background:#1c4df4;border-radius:2px"></div>
<svg class="abs" style="left:1188.4px;top:487.20px" width="7" height="7" viewBox="0 0 7 7"><path d="M1.2 5.4 L1.5 4 L4.8 0.8 L6 2 L2.7 5.2 Z M0.6 6.6 H6.2" fill="none" stroke="#fff" stroke-width="0.75"/></svg>
<div class="t" style="left:1199.7px;top:480.50px;height:22px;line-height:22px;font-size:8px;color:#fff">谷歌验证</div>
<div class="abs" style="left:178.95px;top:171px;width:0.7px;height:336px;background:#eaedef"></div>
<div class="abs" style="left:348.75px;top:171px;width:0.7px;height:336px;background:#eaedef"></div>
<div class="abs" style="left:516.15px;top:171px;width:0.7px;height:336px;background:#eaedef"></div>
<div class="abs" style="left:684.05px;top:171px;width:0.7px;height:336px;background:#eaedef"></div>
<div class="abs" style="left:850.90px;top:171px;width:0.7px;height:336px;background:#eaedef"></div>
<div class="abs" style="left:1019.05px;top:171px;width:0.7px;height:336px;background:#eaedef"></div>
<div class="abs" style="left:1254.95px;top:171px;width:0.7px;height:336px;background:#eaedef"></div>
<div class="t" style="left:504px;top:526.4px;height:18.4px;line-height:18.4px;font-size:9.1px;color:#606266">共 64 条</div>
<div class="abs" style="left:546.6px;top:526.3px;width:67px;height:18.4px;border:0.75px solid #dfe2e6;border-radius:2px;background:#fff"></div>
<div class="t" style="left:558.8px;top:526.4px;height:18.4px;line-height:18.4px;font-size:9.1px;color:#606266">10条/页</div>
<svg class="abs" style="left:602.5px;top:533.5px" width="6" height="4" viewBox="0 0 6 4"><path d="M0.6 0.6 L3 3.2 L5.4 0.6" fill="none" stroke="#c0c4cc" stroke-width="0.7"/></svg>
<div class="abs" style="left:627.2px;top:526.3px;width:19.7px;height:18.4px;background:#f4f4f5;border-radius:2px"></div>
<svg class="abs" style="left:634.0px;top:531.5999999999999px" width="7" height="8" viewBox="0 0 7 8"><path d="M4.5 1 L2 4 L4.5 7" fill="none" stroke="#c0c4cc" stroke-width="0.9"/></svg>
<div class="abs" style="left:654px;top:526.3px;width:19.7px;height:18.4px;background:#1c4df4;border-radius:2px"></div>
<div class="t" style="left:654px;top:526.4px;width:19.7px;height:18.4px;line-height:18.4px;text-align:center;font-size:9.33px;font-weight:bold;color:#fff">1</div>
<div class="abs" style="left:681.2px;top:526.3px;width:19.7px;height:18.4px;background:#f4f4f5;border-radius:2px"></div>
<div class="t" style="left:681.2px;top:526.4px;width:19.7px;height:18.4px;line-height:18.4px;text-align:center;font-size:9.33px;font-weight:bold;color:#55585e">2</div>
<div class="abs" style="left:707.8px;top:526.3px;width:19.7px;height:18.4px;background:#f4f4f5;border-radius:2px"></div>
<div class="t" style="left:707.8px;top:526.4px;width:19.7px;height:18.4px;line-height:18.4px;text-align:center;font-size:9.33px;font-weight:bold;color:#55585e">3</div>
<div class="abs" style="left:734.6px;top:526.3px;width:19.7px;height:18.4px;background:#f4f4f5;border-radius:2px"></div>
<div class="t" style="left:734.6px;top:526.4px;width:19.7px;height:18.4px;line-height:18.4px;text-align:center;font-size:9.33px;font-weight:bold;color:#55585e">4</div>
<div class="abs" style="left:761.3px;top:526.3px;width:19.7px;height:18.4px;background:#f4f4f5;border-radius:2px"></div>
<div class="t" style="left:761.3px;top:526.4px;width:19.7px;height:18.4px;line-height:18.4px;text-align:center;font-size:9.33px;font-weight:bold;color:#55585e">5</div>
<div class="abs" style="left:788px;top:526.3px;width:19.7px;height:18.4px;background:#f4f4f5;border-radius:2px"></div>
<div class="t" style="left:788px;top:526.4px;width:19.7px;height:18.4px;line-height:18.4px;text-align:center;font-size:9.33px;font-weight:bold;color:#55585e">6</div>
<div class="abs" style="left:814.7px;top:526.3px;width:19.7px;height:18.4px;background:#f4f4f5;border-radius:2px"></div>
<div class="t" style="left:814.7px;top:526.4px;width:19.7px;height:18.4px;line-height:18.4px;text-align:center;font-size:9.33px;font-weight:bold;color:#55585e">7</div>
<div class="abs" style="left:842px;top:526.3px;width:19.7px;height:18.4px;background:#f4f4f5;border-radius:2px"></div>
<svg class="abs" style="left:848.8px;top:531.5999999999999px" width="7" height="8" viewBox="0 0 7 8"><path d="M2 1 L4.5 4 L2 7" fill="none" stroke="#555" stroke-width="0.9"/></svg>
<div class="t" style="left:881.7px;top:526.4px;height:18.4px;line-height:18.4px;font-size:9.1px;color:#606266">前往</div>
<div class="abs" style="left:902.9px;top:526.3px;width:30px;height:18.4px;border:0.75px solid #dfe2e6;border-radius:2px;background:#fff"></div>
<div class="t" style="left:902.9px;top:526.4px;width:30px;height:18.4px;line-height:18.4px;text-align:center;font-size:9.1px;color:#606266">1</div>
<div class="t" style="left:935.7px;top:526.4px;height:18.4px;line-height:18.4px;font-size:9.1px;color:#606266">页</div>
<svg class="abs" style="left:1020px;top:540px" width="252" height="84" viewBox="0 0 252 84"><defs><clipPath id="mc"><circle cx="35.5" cy="44" r="35.5"/><rect x="35" y="12" width="217" height="60"/></clipPath></defs><g clip-path="url(#mc)"><rect x="0" y="0" width="12.2" height="12.2" fill="#ffffff"/><rect x="12" y="0" width="12.2" height="12.2" fill="#b9d3ee"/><rect x="24" y="0" width="12.2" height="12.2" fill="#7eaee2"/><rect x="36" y="0" width="12.2" height="12.2" fill="#8cb9e6"/><rect x="48" y="0" width="12.2" height="12.2" fill="#86b5e5"/><rect x="60" y="0" width="12.2" height="12.2" fill="#c6dcf1"/><rect x="72" y="0" width="12.2" height="12.2" fill="#f3f8fd"/><rect x="84" y="0" width="12.2" height="12.2" fill="#c6e0f7"/><rect x="96" y="0" width="12.2" height="12.2" fill="#eef5fc"/><rect x="108" y="0" width="12.2" height="12.2" fill="#b0d4f5"/><rect x="120" y="0" width="12.2" height="12.2" fill="#b5d8f6"/><rect x="132" y="0" width="12.2" height="12.2" fill="#c6e2f9"/><rect x="144" y="0" width="12.2" height="12.2" fill="#b8daf7"/><rect x="156" y="0" width="12.2" height="12.2" fill="#d8ebfb"/><rect x="168" y="0" width="12.2" height="12.2" fill="#b5d8f6"/><rect x="180" y="0" width="12.2" height="12.2" fill="#a6d0f5"/><rect x="192" y="0" width="12.2" height="12.2" fill="#d5e9fa"/><rect x="204" y="0" width="12.2" height="12.2" fill="#9ccaf3"/><rect x="216" y="0" width="12.2" height="12.2" fill="#c6e2f9"/><rect x="228" y="0" width="12.2" height="12.2" fill="#a6d0f5"/><rect x="240" y="0" width="12.2" height="12.2" fill="#a6d0f5"/><rect x="0" y="12" width="12.2" height="12.2" fill="#ffffff"/><rect x="12" y="12" width="12.2" height="12.2" fill="#b9d3ee"/><rect x="24" y="12" width="12.2" height="12.2" fill="#7eaee2"/><rect x="36" y="12" width="12.2" height="12.2" fill="#8cb9e6"/><rect x="48" y="12" width="12.2" height="12.2" fill="#86b5e5"/><rect x="60" y="12" width="12.2" height="12.2" fill="#c6dcf1"/><rect x="72" y="12" width="12.2" height="12.2" fill="#f3f8fd"/><rect x="84" y="12" width="12.2" height="12.2" fill="#c6e0f7"/><rect x="96" y="12" width="12.2" height="12.2" fill="#eef5fc"/><rect x="108" y="12" width="12.2" height="12.2" fill="#b0d4f5"/><rect x="120" y="12" width="12.2" height="12.2" fill="#b5d8f6"/><rect x="132" y="12" width="12.2" height="12.2" fill="#c6e2f9"/><rect x="144" y="12" width="12.2" height="12.2" fill="#b8daf7"/><rect x="156" y="12" width="12.2" height="12.2" fill="#d8ebfb"/><rect x="168" y="12" width="12.2" height="12.2" fill="#b5d8f6"/><rect x="180" y="12" width="12.2" height="12.2" fill="#a6d0f5"/><rect x="192" y="12" width="12.2" height="12.2" fill="#d5e9fa"/><rect x="204" y="12" width="12.2" height="12.2" fill="#9ccaf3"/><rect x="216" y="12" width="12.2" height="12.2" fill="#c6e2f9"/><rect x="228" y="12" width="12.2" height="12.2" fill="#a6d0f5"/><rect x="240" y="12" width="12.2" height="12.2" fill="#a6d0f5"/><rect x="0" y="24" width="12.2" height="12.2" fill="#e0ebf6"/><rect x="12" y="24" width="12.2" height="12.2" fill="#74a8e0"/><rect x="24" y="24" width="12.2" height="12.2" fill="#d4e3f3"/><rect x="36" y="24" width="12.2" height="12.2" fill="#c4d9ef"/><rect x="48" y="24" width="12.2" height="12.2" fill="#8ab7e5"/><rect x="60" y="24" width="12.2" height="12.2" fill="#7fb1e3"/><rect x="72" y="24" width="12.2" height="12.2" fill="#c0dcf5"/><rect x="84" y="24" width="12.2" height="12.2" fill="#c6e1f8"/><rect x="96" y="24" width="12.2" height="12.2" fill="#c8e2f8"/><rect x="108" y="24" width="12.2" height="12.2" fill="#9dcbf3"/><rect x="120" y="24" width="12.2" height="12.2" fill="#a4cff5"/><rect x="132" y="24" width="12.2" height="12.2" fill="#a9d2f5"/><rect x="144" y="24" width="12.2" height="12.2" fill="#a0cdf5"/><rect x="156" y="24" width="12.2" height="12.2" fill="#d8ebfb"/><rect x="168" y="24" width="12.2" height="12.2" fill="#9ccaf3"/><rect x="180" y="24" width="12.2" height="12.2" fill="#9ccaf3"/><rect x="192" y="24" width="12.2" height="12.2" fill="#c6e2f9"/><rect x="204" y="24" width="12.2" height="12.2" fill="#9ccaf3"/><rect x="216" y="24" width="12.2" height="12.2" fill="#b0d4f5"/><rect x="228" y="24" width="12.2" height="12.2" fill="#94c6f2"/><rect x="240" y="24" width="12.2" height="12.2" fill="#94c6f2"/><rect x="0" y="36" width="12.2" height="12.2" fill="#cfe0f2"/><rect x="12" y="36" width="12.2" height="12.2" fill="#9cc2ea"/><rect x="24" y="36" width="12.2" height="12.2" fill="#fafcfe"/><rect x="36" y="36" width="12.2" height="12.2" fill="#d9e6f3"/><rect x="48" y="36" width="12.2" height="12.2" fill="#9ac0e8"/><rect x="60" y="36" width="12.2" height="12.2" fill="#7db0e3"/><rect x="72" y="36" width="12.2" height="12.2" fill="#d3e5f4"/><rect x="84" y="36" width="12.2" height="12.2" fill="#c6e0f6"/><rect x="96" y="36" width="12.2" height="12.2" fill="#f2f8fd"/><rect x="108" y="36" width="12.2" height="12.2" fill="#b3d6f5"/><rect x="120" y="36" width="12.2" height="12.2" fill="#c6e1f8"/><rect x="132" y="36" width="12.2" height="12.2" fill="#bcdbf7"/><rect x="144" y="36" width="12.2" height="12.2" fill="#bcdbf7"/><rect x="156" y="36" width="12.2" height="12.2" fill="#d8ebfb"/><rect x="168" y="36" width="12.2" height="12.2" fill="#bcdbf7"/><rect x="180" y="36" width="12.2" height="12.2" fill="#bcdbf7"/><rect x="192" y="36" width="12.2" height="12.2" fill="#c6e2f9"/><rect x="204" y="36" width="12.2" height="12.2" fill="#aad2f5"/><rect x="216" y="36" width="12.2" height="12.2" fill="#c6e2f9"/><rect x="228" y="36" width="12.2" height="12.2" fill="#c6e2f9"/><rect x="240" y="36" width="12.2" height="12.2" fill="#b0d4f5"/><rect x="0" y="48" width="12.2" height="12.2" fill="#f3f6fa"/><rect x="12" y="48" width="12.2" height="12.2" fill="#f5f8fb"/><rect x="24" y="48" width="12.2" height="12.2" fill="#fbfcfd"/><rect x="36" y="48" width="12.2" height="12.2" fill="#d2e2f2"/><rect x="48" y="48" width="12.2" height="12.2" fill="#86b5e5"/><rect x="60" y="48" width="12.2" height="12.2" fill="#80b2e3"/><rect x="72" y="48" width="12.2" height="12.2" fill="#e3eef8"/><rect x="84" y="48" width="12.2" height="12.2" fill="#f5f9fd"/><rect x="96" y="48" width="12.2" height="12.2" fill="#f5f9fd"/><rect x="108" y="48" width="12.2" height="12.2" fill="#f1f7fc"/><rect x="120" y="48" width="12.2" height="12.2" fill="#f1f7fc"/><rect x="132" y="48" width="12.2" height="12.2" fill="#f8fbfe"/><rect x="144" y="48" width="12.2" height="12.2" fill="#f5f9fd"/><rect x="156" y="48" width="12.2" height="12.2" fill="#f1f7fc"/><rect x="168" y="48" width="12.2" height="12.2" fill="#f8fbfe"/><rect x="180" y="48" width="12.2" height="12.2" fill="#eef5fc"/><rect x="192" y="48" width="12.2" height="12.2" fill="#e8f2fb"/><rect x="204" y="48" width="12.2" height="12.2" fill="#f8fbfe"/><rect x="216" y="48" width="12.2" height="12.2" fill="#f5f9fd"/><rect x="228" y="48" width="12.2" height="12.2" fill="#f5f9fd"/><rect x="240" y="48" width="12.2" height="12.2" fill="#eef5fc"/><rect x="0" y="60" width="12.2" height="12.2" fill="#ffffff"/><rect x="12" y="60" width="12.2" height="12.2" fill="#fcfdfe"/><rect x="24" y="60" width="12.2" height="12.2" fill="#c4d8ee"/><rect x="36" y="60" width="12.2" height="12.2" fill="#a0c3e8"/><rect x="48" y="60" width="12.2" height="12.2" fill="#84b3e4"/><rect x="60" y="60" width="12.2" height="12.2" fill="#c7dcf1"/><rect x="72" y="60" width="12.2" height="12.2" fill="#b5d7f5"/><rect x="84" y="60" width="12.2" height="12.2" fill="#b3d6f5"/><rect x="96" y="60" width="12.2" height="12.2" fill="#b0d4f5"/><rect x="108" y="60" width="12.2" height="12.2" fill="#b5d8f6"/><rect x="120" y="60" width="12.2" height="12.2" fill="#b5d8f6"/><rect x="132" y="60" width="12.2" height="12.2" fill="#d0e6f9"/><rect x="144" y="60" width="12.2" height="12.2" fill="#b5d8f6"/><rect x="156" y="60" width="12.2" height="12.2" fill="#c6e2f9"/><rect x="168" y="60" width="12.2" height="12.2" fill="#b5d8f6"/><rect x="180" y="60" width="12.2" height="12.2" fill="#c6e2f9"/><rect x="192" y="60" width="12.2" height="12.2" fill="#c6e2f9"/><rect x="204" y="60" width="12.2" height="12.2" fill="#b5d8f6"/><rect x="216" y="60" width="12.2" height="12.2" fill="#c6e2f9"/><rect x="228" y="60" width="12.2" height="12.2" fill="#b5d8f6"/><rect x="240" y="60" width="12.2" height="12.2" fill="#a6d0f5"/><rect x="0" y="72" width="12.2" height="12.2" fill="#ffffff"/><rect x="12" y="72" width="12.2" height="12.2" fill="#ffffff"/><rect x="24" y="72" width="12.2" height="12.2" fill="#e0ecf7"/><rect x="36" y="72" width="12.2" height="12.2" fill="#dbe8f5"/><rect x="48" y="72" width="12.2" height="12.2" fill="#f3f7fb"/><rect x="60" y="72" width="12.2" height="12.2" fill="#ffffff"/><rect x="72" y="72" width="12.2" height="12.2" fill="#ffffff"/><rect x="84" y="72" width="12.2" height="12.2" fill="#ffffff"/><rect x="96" y="72" width="12.2" height="12.2" fill="#ffffff"/><rect x="108" y="72" width="12.2" height="12.2" fill="#ffffff"/><rect x="120" y="72" width="12.2" height="12.2" fill="#ffffff"/><rect x="132" y="72" width="12.2" height="12.2" fill="#ffffff"/><rect x="144" y="72" width="12.2" height="12.2" fill="#ffffff"/><rect x="156" y="72" width="12.2" height="12.2" fill="#ffffff"/><rect x="168" y="72" width="12.2" height="12.2" fill="#ffffff"/><rect x="180" y="72" width="12.2" height="12.2" fill="#ffffff"/><rect x="192" y="72" width="12.2" height="12.2" fill="#ffffff"/><rect x="204" y="72" width="12.2" height="12.2" fill="#ffffff"/><rect x="216" y="72" width="12.2" height="12.2" fill="#ffffff"/><rect x="228" y="72" width="12.2" height="12.2" fill="#ffffff"/><rect x="240" y="72" width="12.2" height="12.2" fill="#ffffff"/></g><path d="M0.6 47 A35.2 35.2 0 0 1 38 9" fill="none" stroke="#bcd5ee" stroke-width="1" opacity="0.8"/></svg>
<div class="t" style="left:1087px;top:597.8px;font-size:24px;line-height:30px;color:#e2e2e2;text-shadow:0.8px 0.9px 0.6px #8c8c8c,-0.4px -0.4px 0.3px #fafafa;transform:scaleX(0.915);transform-origin:0 0">CSDN</div>
<div class="t" style="left:1156.5px;top:597.5px;font-size:22px;line-height:30px;color:#e2e2e2;text-shadow:0.8px 0.9px 0.6px #8c8c8c,-0.4px -0.4px 0.3px #fafafa;transform:scaleX(0.9);transform-origin:0 0">@</div>
<div class="t" style="left:1177.5px;top:596.5px;font-size:24.3px;line-height:30px;color:#e2e2e2;text-shadow:0.8px 0.9px 0.6px #8c8c8c,-0.4px -0.4px 0.3px #fafafa">希希分享</div>
</div></body></html>
